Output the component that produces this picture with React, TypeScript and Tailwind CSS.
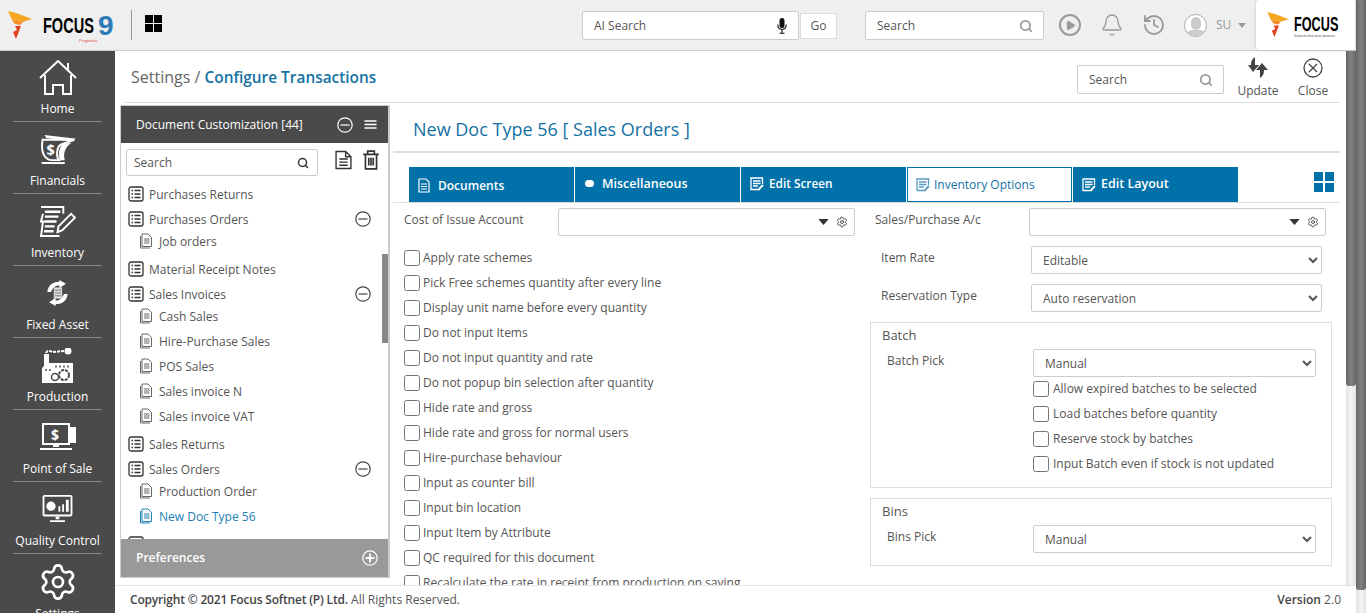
import React from "react";
import { Settings, Search, Bell, History, Play } from "lucide-react";

const Flame = ({ className }: { className: string }) => (
  <svg viewBox="0 0 25 28" className={className}>
    <path d="M0 0 L8 2 L24 8 L15 11 L4 9 Z" fill="#f5a623" />
    <path d="M4 9 L15 11 L12 14 L7 13 Z" fill="#f58a1f" />
    <path d="M7 15 L13 15 L8 28 L5 21 L9 19 Z" fill="#e2401f" />
  </svg>
);

const HomeIcon = () => (
  <svg viewBox="0 0 38 36" className="w-[38px] h-[36px]" fill="none" stroke="#fff" strokeWidth="2">
    <path d="M1 18 L19 1 L37 18" />
    <path d="M6 15 V34 H14 V25 H24 V34 H32 V15" />
    <path d="M29 10 V3" />
  </svg>
);
const FinIcon = () => (
  <svg viewBox="0 0 38 30" className="w-[38px] h-[29px]">
    <path d="M3 5 L36 5 L24 9 C20 10 18 14 18 19 C18 23 19 25 20 26 L12 26 C5 25 1 18 3 5 Z" fill="none" stroke="#fff" strokeWidth="2" />
    <path d="M5 0 L38 4 L29 6 L7 3 Z" fill="#fff" />
    <path d="M24 9 L33 8 C27 12 24 18 26 26 L21 26 C19 20 20 13 24 9 Z" fill="#fff" />
    <path d="M2 28 H26 V30 H2 Z" fill="#fff" />
    <text x="7" y="21" fontSize="15" fontWeight="700" fill="#fff" fontFamily="Open Sans">$</text>
  </svg>
);
const InvIcon = () => (
  <svg viewBox="0 0 38 32" className="w-[37px] h-[31px]" fill="none" stroke="#fff" strokeWidth="2">
    <path d="M2 1 H25 V8 M4 8 L2 16 H6 M4 16 L2 31 H21" />
    <path d="M6 6 H22 M6 11 H20 M6 16 H18 M6 21 H16 M5 26 H15" strokeWidth="2.5" />
    <path d="M19 27 L20 21 L33 8 L37 12 L24 25 Z" />
  </svg>
);
const AssetIcon = () => (
  <svg viewBox="0 0 24 28" className="w-[23px] h-[26px]">
    <path d="M1 13 C2 5 8 2 14 2 L14 0 L21 4 L14 9 L14 6 C10 6 7 8 5 13 Z" fill="#fff" />
    <path d="M23 15 C22 23 16 26 10 26 L10 28 L3 24 L10 19 L10 22 C14 22 17 20 19 15 Z" fill="#fff" />
    <path d="M8 8 H17 V20 H8 Z" fill="#ddd" />
    <path d="M9 11 H16 M9 14 H16 M9 17 H16" stroke="#777" strokeWidth="1" />
  </svg>
);
const ProdIcon = () => (
  <svg viewBox="0 0 31 35" className="w-[31px] h-[35px]">
    <path d="M4 5 C5 2 9 3 11 4 L22 3" fill="none" stroke="#fff" strokeWidth="2" strokeDasharray="3 1" />
    <circle cx="26" cy="3" r="3.5" fill="#fff" />
    <path d="M2 6 H7 V15 L31 15 V35 H0 V20 L2 18 Z" fill="#fff" />
    <path d="M13 18.5 H28 M3 22 H10" stroke="#777" strokeWidth="2" strokeDasharray="2 2" />
    <circle cx="22" cy="27" r="5" fill="#fff" stroke="#4a4a4a" strokeWidth="2" strokeDasharray="3 1" />
    <circle cx="13" cy="29" r="3.5" fill="#fff" stroke="#4a4a4a" strokeWidth="1.5" />
  </svg>
);
const PosIcon = () => (
  <svg viewBox="0 0 38 28" className="w-[38px] h-[28px]">
    <rect x="4" y="1" width="26" height="20" fill="none" stroke="#fff" strokeWidth="2" />
    <rect x="31" y="4" width="6" height="16" fill="#fff" />
    <text x="12" y="17" fontSize="14" fontWeight="700" fill="#fff" fontFamily="Open Sans">$</text>
    <path d="M14 22 H20 V24 H14 Z M1 25 H33 V27 H1 Z" fill="#fff" />
  </svg>
);
const QcIcon = () => (
  <svg viewBox="0 0 34 30" className="w-[33px] h-[28px]">
    <rect x="2" y="1" width="30" height="21" rx="1" fill="none" stroke="#fff" strokeWidth="2" />
    <circle cx="10" cy="12" r="5" fill="#fff" />
    <path d="M18 18 V12 H20 V18 Z M22 18 V10 H24 V18 Z M26 18 V5 H29 V18 Z" fill="#fff" />
    <path d="M15 23 H19 V26 H15 Z M9 27 H25 V29 H9 Z" fill="#fff" />
  </svg>
);

const navItems: [string, React.ReactNode][] = [
  ["Home", <HomeIcon />],
  ["Financials", <FinIcon />],
  ["Inventory", <InvIcon />],
  ["Fixed Asset", <AssetIcon />],
  ["Production", <ProdIcon />],
  ["Point of Sale", <PosIcon />],
  ["Quality Control", <QcIcon />],
  ["Settings", <Settings size={40} strokeWidth={1.6} color="#fff" />],
];

const ListIcon = () => (
  <svg viewBox="0 0 16 16" className="w-[16px] h-[16px] shrink-0 -mt-[1px]" fill="none" stroke="#333" strokeWidth="1.3">
    <rect x="1" y="1" width="14" height="14" rx="2" />
    <path d="M3.5 4.5 H5 M6.5 4.5 H12.5 M3.5 8 H5 M6.5 8 H12.5 M3.5 11.5 H5 M6.5 11.5 H12.5" />
  </svg>
);
const DocIcon = ({ color = "#666" }: { color?: string }) => (
  <svg viewBox="0 0 14 16" className="w-[14px] h-[16px] shrink-0 -mt-[2px]" fill="none" stroke={color} strokeWidth="1">
    <path d="M3 1 H9 L12.5 4.5 V13.5 H3 Z" />
    <path d="M1.5 3 V15 H11" />
    <path d="M5 6 H10.5 M5 8 H10.5 M5 10 H10.5" />
  </svg>
);
const MinusCircle = ({ color = "#444", plus = false }: { color?: string; plus?: boolean }) => (
  <svg viewBox="0 0 16 16" className="w-[16px] h-[16px] shrink-0" fill="none" stroke={color} strokeWidth="1.2">
    <circle cx="8" cy="8" r="7.2" />
    <path d="M3.5 8 H12.5" strokeWidth={plus ? 1.8 : 1.2} />
    {plus && <path d="M8 3.5 V12.5" strokeWidth="1.8" />}
  </svg>
);

type Row = { t: string; exp?: boolean; kids?: string[]; active?: string };
const rows: Row[] = [
  { t: "Purchases Returns" },
  { t: "Purchases Orders", exp: true, kids: ["Job orders"] },
  { t: "Material Receipt Notes" },
  { t: "Sales Invoices", exp: true, kids: ["Cash Sales", "Hire-Purchase Sales", "POS Sales", "Sales invoice N", "Sales invoice VAT"] },
  { t: "Sales Returns" },
  { t: "Sales Orders", exp: true, kids: ["Production Order", "New Doc Type 56"], active: "New Doc Type 56" },
  { t: "" },
];

const checks = [
  "Apply rate schemes",
  "Pick Free schemes quantity after every line",
  "Display unit name before every quantity",
  "Do not input Items",
  "Do not input quantity and rate",
  "Do not popup bin selection after quantity",
  "Hide rate and gross",
  "Hide rate and gross for normal users",
  "Hire-purchase behaviour",
  "Input as counter bill",
  "Input bin location",
  "Input Item by Attribute",
  "QC required for this document",
  "Recalculate the rate in receipt from production on saving",
];
const batchChecks = [
  "Allow expired batches to be selected",
  "Load batches before quantity",
  "Reserve stock by batches",
  "Input Batch even if stock is not updated",
];

const TabDoc = () => (
  <svg viewBox="0 0 12 15" className="w-[12px] h-[15px]" fill="none" stroke="#fff" strokeWidth="1.2">
    <path d="M1 1 H8 L11 4 V14 H1 Z" />
    <path d="M3 6 H9 M3 8.5 H9 M3 11 H9" />
  </svg>
);
const TabEdit = ({ color = "#fff" }: { color?: string }) => (
  <svg viewBox="0 0 14 14" className="w-[14px] h-[14px]" fill="none" stroke={color} strokeWidth="1.3">
    <path d="M10 12.5 H1 V1 H12.5 V7" />
    <path d="M3 4 H10.5 M3 6.5 H10.5 M3 9 H8" />
    <path d="M9 12 L13 8" strokeWidth="2" />
  </svg>
);

const Tab = ({ icon, label, className }: { icon: React.ReactNode; label: string; className: string }) => (
  <div className={`w-[165px] h-[35px] flex items-center ${className}`}>
    {icon}
    <span>{label}</span>
  </div>
);

const ComboBox = ({ w }: { w: string }) => (
  <div className={`${w} h-[28px] border border-[#ccc] rounded-[2px] flex items-center justify-end pr-[6px] gap-[7px] bg-white`}>
    <svg viewBox="0 0 12 7" className="w-[11px] h-[6px]"><path d="M0 0 H12 L6 7 Z" fill="#333" /></svg>
    <Settings size={12} color="#555" />
  </div>
);

const Sel = ({ v, w }: { v: string; w: string }) => (
  <select defaultValue={v} className={`${w} h-[28px] border border-[#ccc] rounded-[2px] bg-white text-[12px] text-[#555] pl-[7px]`}>
    <option>{v}</option>
  </select>
);

const Check = ({ t, gap = "mr-[3px]" }: { t: string; gap?: string }) => (
  <label className="h-[25px] flex items-center text-[12px] text-[#555]">
    <input type="checkbox" className={`w-[16px] h-[16px] m-0 shrink-0 ${gap}`} />
    <span className="whitespace-nowrap">{t}</span>
  </label>
);

const SearchBox = ({ w }: { w: string }) => (
  <div className={`${w} h-[29px] border border-[#ccc] rounded-[2px] bg-white flex items-center justify-between pl-[11px] pr-[10px] text-[12px] text-[#555]`}>
    <span>Search</span>
    <Search size={14} color="#999" strokeWidth={3} />
  </div>
);

export default function App() {
  return (
    <div className="w-[1366px] h-[613px] overflow-hidden flex bg-white font-['Open_Sans',sans-serif]">
      <div className="w-[1356px] h-full flex flex-col">
        {/* top bar */}
        <header className="h-[51px] shrink-0 bg-[#efefef] border-b border-[#ccc] flex items-center">
          <Flame className="w-[25px] h-[28px] ml-[8px] -mt-[1px]" />
          <div className="ml-[10px] w-[88px] flex flex-col mt-[7px]">
            <div className="flex items-center leading-none h-[24px]">
              <span className="inline-block w-[53px] origin-left scale-x-[0.66] font-['Liberation_Sans',sans-serif] font-bold text-[22px] text-black">FOCUS</span>
              <span className="font-['Liberation_Sans',sans-serif] font-bold text-[28px] text-[#2c7cb8] ml-[2px]">9</span>
            </div>
            <span className="text-[4px] leading-[5px] text-[#d33] pl-[36px] whitespace-nowrap">Pragmatic</span>
          </div>
          <div className="w-px h-[30px] bg-[#999]" />
          <div className="grid grid-cols-2 gap-[1px] w-[17px] h-[17px] ml-[13px] -mt-[4px]">
            <i className="bg-black" /><i className="bg-black" /><i className="bg-black" /><i className="bg-black" />
          </div>
          <div className="ml-[420px] mt-[1px] w-[217px] h-[29px] border border-[#ccc] rounded-[2px] bg-white flex items-center justify-between pl-[11px] pr-[11px] text-[12px] text-[#555]">
            <span>AI Search</span>
            <svg viewBox="0 0 10 16" className="w-[10px] h-[16px]">
              <rect x="2.5" y="0" width="5" height="10" rx="2.5" fill="#111" />
              <path d="M0.8 6.5 C0.8 13 9.2 13 9.2 6.5 M5 11 V15 M2.5 15.2 H7.5" fill="none" stroke="#111" strokeWidth="1.1" />
            </svg>
          </div>
          <div className="ml-[1px] mt-[1px] w-[37px] h-[26px] border border-[#ddd] bg-white flex items-center justify-center text-[12px] text-[#555]">Go</div>
          <SearchBox w="w-[179px] ml-[28px] mt-[1px]" />
          <div className="ml-[15px] w-[22px] h-[22px] rounded-full border-2 border-[#999] flex items-center justify-center">
            <Play size={11} fill="#999" color="#999" />
          </div>
          <Bell size={24} color="#999" strokeWidth={1.3} className="ml-[19px]" />
          <History size={24} color="#999" strokeWidth={1.8} className="ml-[18px]" />
          <div className="ml-[18px] w-[23px] h-[23px] rounded-full border border-[#aaa] bg-white overflow-hidden flex flex-col items-center">
            <div className="w-[10px] h-[13px] rounded-full bg-[#ccc] mt-[2px] shrink-0" />
            <div className="w-[18px] h-[10px] rounded-full bg-[#ccc] shrink-0" />
          </div>
          <span className="ml-[9px] text-[12px] text-[#999]">SU</span>
          <svg viewBox="0 0 8 5" className="w-[8px] h-[5px] ml-[7px]"><path d="M0 0 H8 L4 5 Z" fill="#999" /></svg>
          <div className="ml-[10px] w-[99px] h-[50px] bg-white rounded-[3px] shadow-[0_0_3px_#bbb] flex items-center pl-[11px] self-start">
            <Flame className="w-[23px] h-[25px] shrink-0 -mt-[2px]" />
            <div className="flex flex-col w-[45px] ml-[4px] mt-[3px]">
              <span className="inline-block origin-left scale-x-[0.65] font-['Liberation_Sans',sans-serif] font-bold text-[19.5px] leading-[17px] text-black">FOCUS</span>
              <span className="inline-block origin-left scale-x-[0.75] text-[4px] leading-[5px] text-[#333] whitespace-nowrap">Solutions that move business</span>
            </div>
          </div>
        </header>

        <div className="flex-1 flex min-h-0">
          {/* sidebar */}
          <nav className="w-[115px] shrink-0 bg-[#4a4a4a] overflow-hidden">
            {navItems.map(([label, icon]) => (
              <div key={label} className="h-[72px] mx-[13px] border-b border-[#888] flex flex-col items-center justify-end pb-[4px] text-white text-[12px] leading-[17px] last:border-b-0 last:justify-start last:pt-0 first:h-[71px]">
                <div className="flex-1 flex items-center justify-center min-h-[42px] pt-[4px]">{icon}</div>
                <span className="whitespace-nowrap">{label}</span>
              </div>
            ))}
          </nav>

          <div className="flex-1 flex flex-col min-w-0">
            <div className="flex-1 flex min-h-0">
              <main className="w-[1231px] flex flex-col overflow-hidden">
                {/* title bar */}
                <div className="h-[52px] shrink-0 ml-[10px] mr-[6px] border-b border-[#ddd] flex items-center pl-[6px]">
                  <div className="text-[16px] text-[#666] mt-[1px]">Settings / <span className="font-semibold text-[15.4px] text-[#1472a4]">Configure Transactions</span></div>
                  <div className="ml-auto flex items-start">
                    <SearchBox w="w-[147px] mt-[11px]" />
                    <div className="w-[68px] flex flex-col items-center text-[12px] text-[#555] mt-[3px]">
                      <svg viewBox="0 0 20 22" className="w-[20px] h-[22px]" fill="#444">
                        <path d="M7 0 L7 8 L11 8 L5 15 L0 8 L3 8 C3 4 4 2 7 0 Z" />
                        <path d="M12 21 L12 13 L8 13 L14 6 L20 13 L16 13 C16 17 15 19 12 21 Z" />
                      </svg>
                      <span className="leading-[17px] mt-[3px]">Update</span>
                    </div>
                    <div className="w-[42px] flex flex-col items-center text-[12px] text-[#555] mt-[3px]">
                      <svg viewBox="0 0 20 20" className="w-[20px] h-[20px] mt-[1px]" fill="none" stroke="#444" strokeWidth="1.3">
                        <circle cx="10" cy="10" r="9" />
                        <path d="M6 6 L14 14 M14 6 L6 14" />
                      </svg>
                      <span className="leading-[17px] mt-[4px]">Close</span>
                    </div>
                    <div className="w-[6px]" />
                  </div>
                </div>

                <div className="flex-1 flex min-h-0">
                  {/* left panel */}
                  <aside className="ml-[5px] mt-[2px] w-[270px] h-[473px] shrink-0 border-l border-r-2 border-t border-b border-[#ccc] flex flex-col">
                    <div className="h-[37px] shrink-0 bg-[#4a4a4a] flex items-center pl-[15px] pr-[11px] text-white text-[12px]">
                      <span>Document Customization [44]</span>
                      <span className="ml-auto flex items-center gap-[11px]">
                        <MinusCircle color="#fff" />
                        <svg viewBox="0 0 12 9" className="w-[13px] h-[9px]"><path d="M0 1 H12 M0 4.5 H12 M0 8 H12" stroke="#fff" strokeWidth="1.4" /></svg>
                      </span>
                    </div>
                    <div className="h-[39px] shrink-0 flex items-start pt-[6px] pl-[5px]">
                      <div className="w-[192px] h-[27px] border border-[#ccc] rounded-[2px] flex items-center justify-between pl-[7px] pr-[8px] text-[12px] text-[#555]">
                        <span>Search</span>
                        <Search size={12} color="#333" strokeWidth={3} />
                      </div>
                      <svg viewBox="0 0 16 18" className="w-[17px] h-[20px] ml-[17px] mt-[1px]" fill="none" stroke="#333" strokeWidth="1.3">
                        <path d="M1 1 H10 L15 6 V17 H1 Z M10 1 V6 H15" />
                        <path d="M4 8 H12 M4 11 H12 M4 14 H12" />
                      </svg>
                      <svg viewBox="0 0 16 18" className="w-[18px] h-[20px] ml-[10px] mt-[1px]" fill="none" stroke="#333" strokeWidth="1.5">
                        <path d="M1 4 H15 M5 4 V1 H11 V4 M3 4 V17 H13 V4 M6 7 V14 M8 7 V14 M10 7 V14" />
                      </svg>
                    </div>
                    <div className="flex-1 min-h-0 flex overflow-hidden">
                      <div className="flex-1 min-w-0 pl-[7px] pr-[11px]">
                        {rows.map((r, i) => (
                          <div key={i}>
                            <div className="h-[25px] flex items-center gap-[5px] text-[12px] text-[#555]">
                              <ListIcon />
                              {r.t && <span>{r.t}</span>}
                              {r.exp && <span className="ml-auto -mt-[2px]"><MinusCircle /></span>}
                            </div>
                            {r.kids && (
                              <div className="-mt-[3px] mb-[3px]">
                                {r.kids.map((k) => (
                                  <div key={k} className={`h-[25px] pl-[11px] flex items-center gap-[6px] text-[12px] ${k === r.active ? "text-[#1c80b4]" : "text-[#555]"}`}>
                                    <DocIcon color={k === r.active ? "#1c80b4" : "#666"} />
                                    <span>{k}</span>
                                  </div>
                                ))}
                              </div>
                            )}
                          </div>
                        ))}
                      </div>
                      <div className="w-[6px] shrink-0">
                        <div className="w-[6px] h-[89px] mt-[72px] bg-[#888]" />
                      </div>
                    </div>
                    <div className="h-[38px] shrink-0 bg-[#999] flex items-center justify-between pl-[15px] pr-[10px] text-white text-[12px] font-semibold">
                      <span>Preferences</span>
                      <MinusCircle color="#fff" plus />
                    </div>
                  </aside>

                  {/* right section */}
                  <section className="flex-1 min-w-0 pl-[3px] pr-[6px] flex flex-col overflow-hidden">
                    <div className="h-[50px] shrink-0 border-b-2 border-[#ddd] flex items-center pl-[20px] pt-[4px] text-[18px] text-[#1472a4]">New Doc Type 56 [ Sales Orders ]</div>
                    <div className="h-[50px] shrink-0 pt-[14px] pl-[16px] border-b border-[#ddd] flex items-start gap-[1px] font-semibold text-white">
                      <Tab className="bg-[#0071a9] pl-[9px] pt-[2px] gap-[8px] text-[12px]" icon={<TabDoc />} label="Documents" />
                      <Tab className="bg-[#0071a9] pl-[10px] gap-[8px] text-[12.5px]" icon={<span className="w-[9px] h-[7px] rounded-full bg-white -mt-[3px]" />} label="Miscellaneous" />
                      <Tab className="bg-[#0071a9] pl-[9px] pb-[2px] gap-[5px] text-[11.8px]" icon={<TabEdit />} label="Edit Screen" />
                      <Tab className="bg-white border border-[#0071a9] pl-[8px] gap-[4px] text-[#1472a4] font-normal text-[12px]" icon={<TabEdit color="#5a9bc4" />} label="Inventory Options" />
                      <Tab className="bg-[#0071a9] pl-[9px] gap-[5px] text-[12.5px]" icon={<TabEdit />} label="Edit Layout" />
                      <div className="ml-auto mr-[6px] mt-[5px] grid grid-cols-2 gap-[2px] w-[20px] h-[20px]">
                        <i className="bg-[#0071a9]" /><i className="bg-[#0071a9]" /><i className="bg-[#0071a9]" /><i className="bg-[#0071a9]" />
                      </div>
                    </div>
                    <div className="flex-1 min-h-0 flex overflow-hidden">
                      {/* left form col */}
                      <div className="w-[472px] shrink-0 pl-[11px] pt-[5px]">
                        <div className="flex items-start text-[12px] text-[#555] mb-[3px]">
                          <span className="w-[154px] pt-[3px]">Cost of Issue Account</span>
                          <ComboBox w="w-[297px]" />
                        </div>
                        <div className="mt-[9.5px]">
                          {checks.map((c) => <Check key={c} t={c} />)}
                        </div>
                      </div>
                      {/* right form col */}
                      <div className="flex-1 min-w-0 pt-[5px] pl-[5px]">
                        <div className="flex items-start text-[12px] text-[#555]">
                          <span className="w-[159px] pl-[5px] pt-[3px]">Sales/Purchase A/c</span>
                          <ComboBox w="w-[297px]" />
                        </div>
                        <div className="flex items-start text-[12px] text-[#555] mt-[10px]">
                          <span className="w-[161px] pl-[11px] pt-[3px]">Item Rate</span>
                          <Sel v="Editable" w="w-[291px]" />
                        </div>
                        <div className="flex items-start text-[12px] text-[#555] mt-[10px]">
                          <span className="w-[161px] pl-[11px] pt-[3px]">Reservation Type</span>
                          <Sel v="Auto reservation" w="w-[291px]" />
                        </div>
                        <div className="w-[462px] h-[166px] mt-[10px] border border-[#ddd] pl-[11px]">
                          <div className="text-[13px] text-[#555] leading-[18px] mt-[3px]">Batch</div>
                          <div className="flex items-start text-[12px] text-[#555] mt-[5px]">
                            <span className="w-[151px] pl-[5px] pt-[3px]">Batch Pick</span>
                            <Sel v="Manual" w="w-[283px]" />
                          </div>
                          <div className="ml-[151px] -mt-[1px]">
                            {batchChecks.map((c) => <Check key={c} t={c} gap="mr-[4px]" />)}
                          </div>
                        </div>
                        <div className="w-[462px] h-[68px] mt-[10px] border border-[#ddd] pl-[11px]">
                          <div className="text-[13px] text-[#555] leading-[18px] mt-[3px]">Bins</div>
                          <div className="flex items-start text-[12px] text-[#555] mt-[5px]">
                            <span className="w-[151px] pl-[5px] pt-[3px]">Bins Pick</span>
                            <Sel v="Manual" w="w-[283px]" />
                          </div>
                        </div>
                      </div>
                    </div>
                  </section>
                </div>
              </main>
              {/* inner scrollbar */}
              <div className="w-[10px] shrink-0 bg-gradient-to-r from-[#e2e2e2] via-[#f4f4f4] to-[#e2e2e2]">
                <div className="h-[335px] rounded-b-[3px] bg-gradient-to-r from-[#666] via-[#828282] to-[#666]" />
              </div>
            </div>
            <footer className="h-[28px] shrink-0 border-t border-[#e5e5e5] bg-white flex items-center justify-between pl-[15px] pr-[15px] text-[12px] text-[#555]">
              <span><span className="font-semibold text-[#444] tracking-[-0.18px]">Copyright © 2021 Focus Softnet (P) Ltd.</span> All Rights Reserved.</span>
              <span><span className="font-semibold text-[#444]">Version</span> 2.0</span>
            </footer>
          </div>
        </div>
      </div>
      {/* page scrollbar */}
      <div className="w-[10px] shrink-0 bg-gradient-to-r from-[#e2e2e2] via-[#f4f4f4] to-[#e2e2e2]">
        <div className="h-[590px] rounded-b-[3px] bg-gradient-to-r from-[#666] via-[#828282] to-[#666]" />
      </div>
    </div>
  );
}
